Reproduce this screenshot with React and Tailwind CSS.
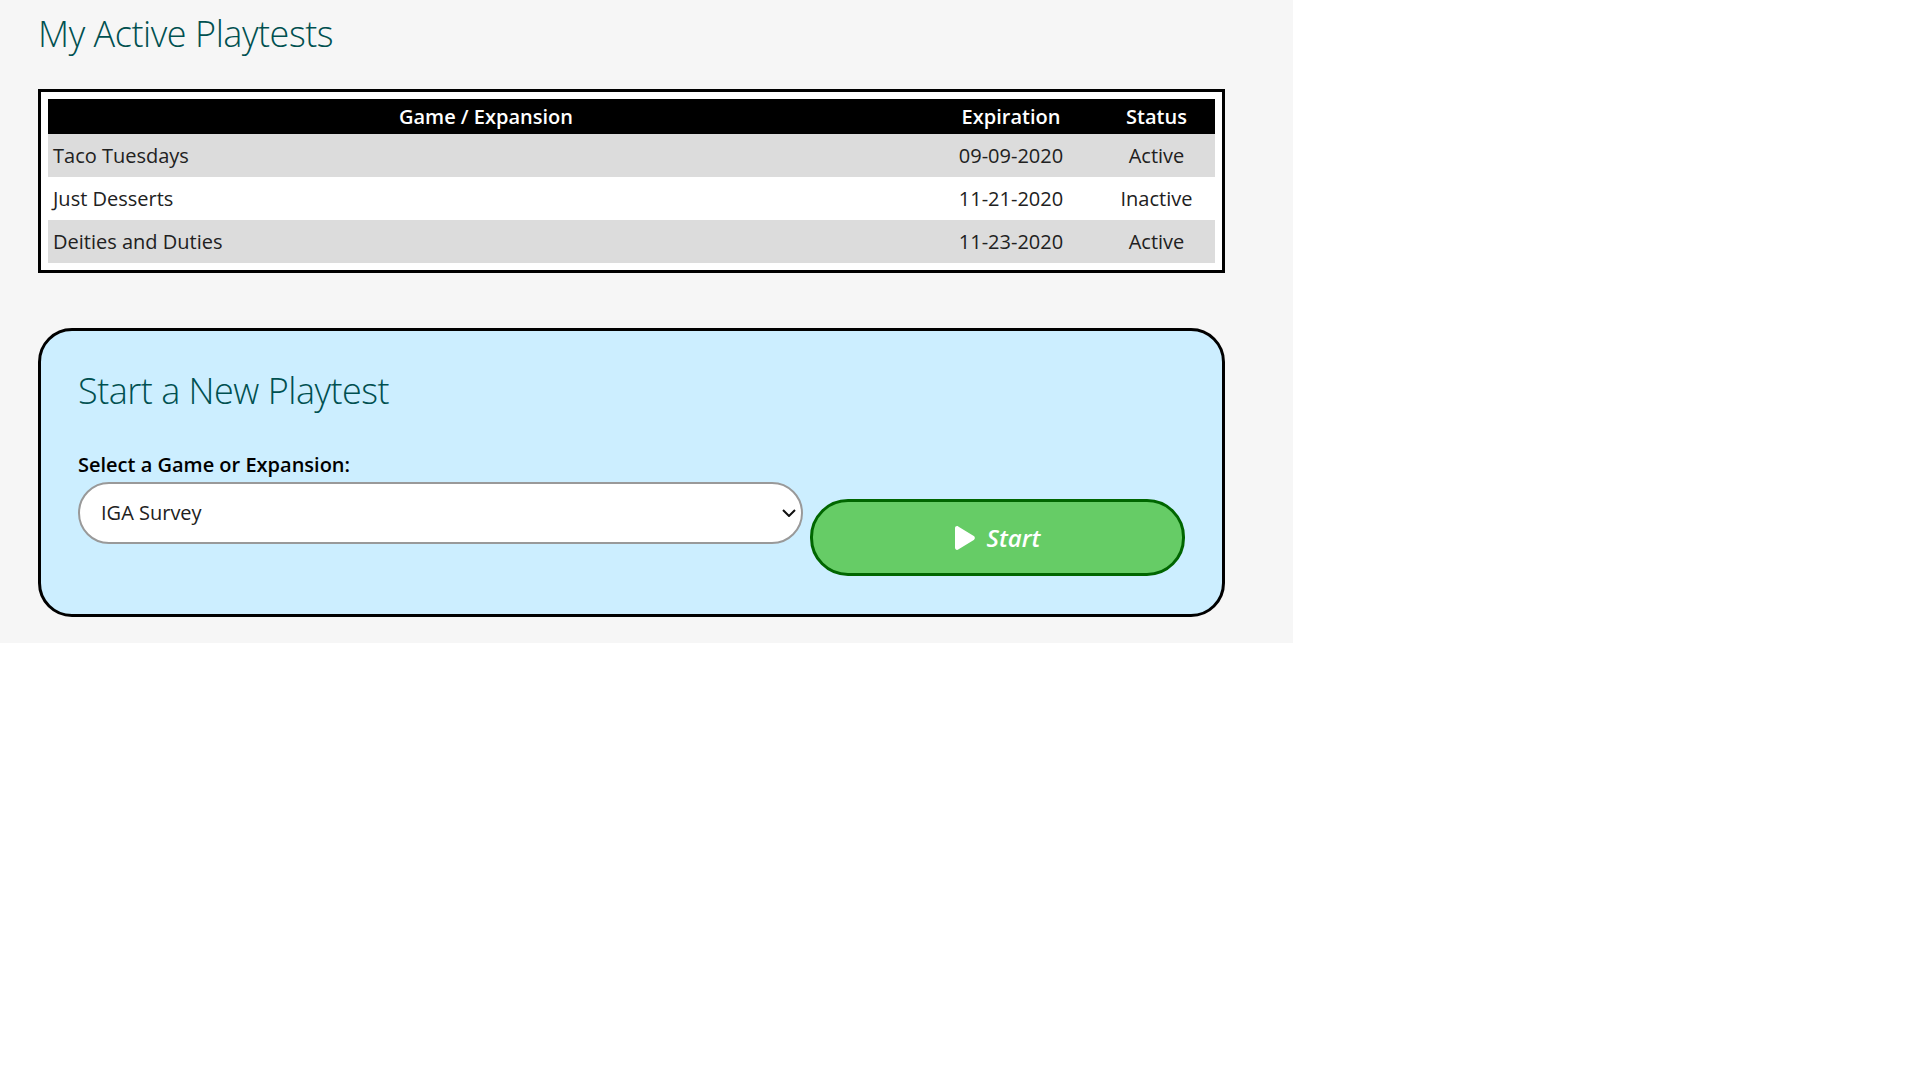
import React from 'react';

const rows = [
  { name: 'Taco Tuesdays', expires: '09-09-2020', status: 'Active' },
  { name: 'Just Desserts', expires: '11-21-2020', status: 'Inactive' },
  { name: 'Deities and Duties', expires: '11-23-2020', status: 'Active' },
];

const App = () => {
  return (
    <div className="min-h-screen bg-white font-['Open_Sans',sans-serif] text-[20px] text-[#212121]">
      <div className="w-[1293px] h-[643px] bg-[#f6f6f6] px-[38px]">
        <h2 className="text-[36px] leading-[44px] tracking-[-0.45px] font-light text-[#005050] pt-[12px]">My Active Playtests</h2>

        {/* Active playtests table */}
        <div className="mt-[33px] w-[1187px] border-[3px] border-black bg-white p-[7px]">
          <table className="w-full table-fixed border-collapse">
            <thead>
              <tr className="h-[35px] bg-black text-white">
                <th className="w-[876px] font-semibold">Game / Expansion</th>
                <th className="w-[174px] font-semibold">Expiration</th>
                <th className="w-[117px] font-semibold">Status</th>
              </tr>
            </thead>
            <tbody>
              {rows.map((row, i) => (
                <tr key={row.name} className={i % 2 === 0 ? 'h-[43px] bg-[#dcdcdc]' : 'h-[43px] bg-white'}>
                  <td className="pl-[5px]">{row.name}</td>
                  <td className="text-center">{row.expires}</td>
                  <td className="text-center">{row.status}</td>
                </tr>
              ))}
            </tbody>
          </table>
        </div>

        {/* New playtest form */}
        <div className="mt-[55px] w-[1187px] h-[289px] rounded-[34px] border-[3px] border-black bg-[#cceeff] px-[37px]">
          <h2 className="text-[36px] leading-[44px] tracking-[-0.5px] font-light text-[#005050] pt-[38px]">Start a New Playtest</h2>
          <label className="mt-[38px] mb-[3px] block text-[20px] leading-[28px] font-semibold text-black">Select a Game or Expansion:</label>
          <div className="flex items-start gap-[7px]">
            <div className="relative">
              <select
                defaultValue="IGA Survey"
                className="block appearance-none w-[725px] h-[62px] rounded-[31px] border-2 border-[#999999] bg-white pl-[21px] text-[20px] text-[#212121]"
              >
                <option>IGA Survey</option>
              </select>
              {/* chevron drawn over the select */}
              <svg viewBox="0 0 14 8" className="absolute right-[7px] top-[27px] w-[14px] h-[8px]" fill="none" stroke="#111111" strokeWidth="2">
                <path d="M1 1l6 6 6-6" />
              </svg>
            </div>
            <button className="mt-[17px] flex w-[375px] h-[77px] items-center justify-center gap-[12px] rounded-[38px] border-[3px] border-[#006600] bg-[#66cc66] text-[24px] font-semibold italic text-white">
              <svg viewBox="0 0 20 24" className="w-[20px] h-[24px]" fill="currentColor">
                <path d="M0 2.2C0 .5 1.8-.5 3.2.4l15.6 9.7c1.4.9 1.4 2.900 0 3.800L3.200 23.600C1.800 24.500 0 23.500 0 21.800z" />
              </svg>
              Start
            </button>
          </div>
        </div>
      </div>
    </div>
  );
};

export default App;
